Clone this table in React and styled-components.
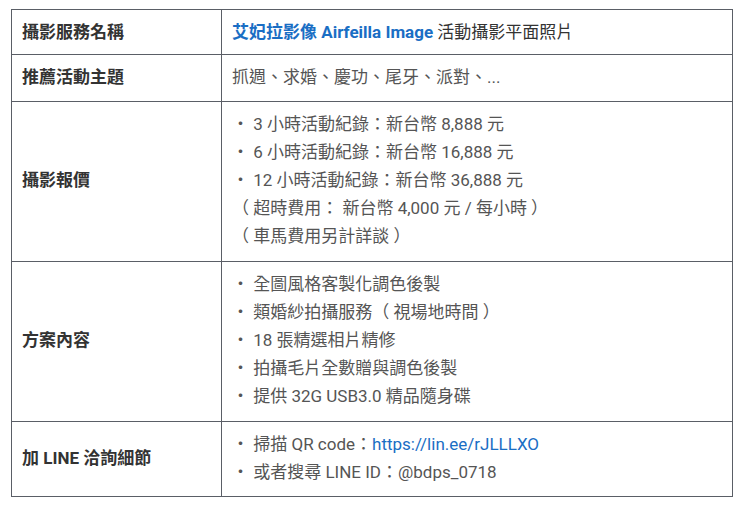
import React from 'react';
import styled, { createGlobalStyle } from 'styled-components';

const GlobalStyle = createGlobalStyle`
  body {
    margin: 0;
    background: #ffffff;
    font-family: Roboto, "Noto Sans CJK TC", sans-serif;
  }
`;

const Page = styled.div`
  padding: 9px 8px 0 11px;
`;

const Table = styled.table`
  width: 722px;
  border-collapse: collapse;
  font-size: 17px;
  line-height: 28px;
`;

const Head = styled.th`
  width: 189px;
  padding: 8px 10px ${(p) => p.$bottom}px;
  border: 1px solid #5a5e66;
  text-align: left;
  vertical-align: middle;
  font-weight: 700;
  color: #333;
`;

const Cell = styled.td`
  padding: 8px 10px ${(p) => p.$bottom}px;
  border: 1px solid #5a5e66;
  vertical-align: middle;
  color: #555;
`;

const Title = styled.span`
  color: #1a6ec4;
  font-weight: 700;
`;

const Rest = styled.span`
  color: #333;
`;

const Line = styled.div``;

const Link = styled.a`
  color: #1a6ec4;
  text-decoration: none;
`;

const rows = [
  {
    label: '推薦活動主題',
    bottom: 10,
    lines: ['抓週、求婚、慶功、尾牙、派對、...'],
  },
  {
    label: '攝影報價',
    bottom: 11,
    lines: [
      '・ 3 小時活動紀錄：新台幣 8,888 元',
      '・ 6 小時活動紀錄：新台幣 16,888 元',
      '・ 12 小時活動紀錄：新台幣 36,888 元',
      '（ 超時費用： 新台幣 4,000 元 / 每小時 ）',
      '（ 車馬費用另計詳談 ）',
    ],
  },
  {
    label: '方案內容',
    bottom: 11,
    lines: [
      '・ 全圖風格客製化調色後製',
      '・ 類婚紗拍攝服務（ 視場地時間 ）',
      '・ 18 張精選相片精修',
      '・ 拍攝毛片全數贈與調色後製',
      '・ 提供 32G USB3.0 精品隨身碟',
    ],
  },
];

export default function App() {
  return (
    <>
      <GlobalStyle />
      <Page>
        <Table>
          <tbody>
            <tr>
              <Head $bottom={8}>攝影服務名稱</Head>
              <Cell $bottom={8}>
                <Title>艾妃拉影像 Airfeilla Image</Title> <Rest>活動攝影平面照片</Rest>
              </Cell>
            </tr>
            {rows.map((r) => (
              <tr key={r.label}>
                <Head $bottom={r.bottom}>{r.label}</Head>
                <Cell $bottom={r.bottom}>
                  {r.lines.map((l) => (
                    <Line key={l}>{l}</Line>
                  ))}
                </Cell>
              </tr>
            ))}
            <tr>
              <Head $bottom={10}>加 LINE 洽詢細節</Head>
              <Cell $bottom={10}>
                <Line>
                  ・ 掃描 QR code：<Link href="#">https://lin.ee/rJLLLXO</Link>
                </Line>
                <Line>・ 或者搜尋 LINE ID：@bdps_0718</Line>
              </Cell>
            </tr>
          </tbody>
        </Table>
      </Page>
    </>
  );
}
